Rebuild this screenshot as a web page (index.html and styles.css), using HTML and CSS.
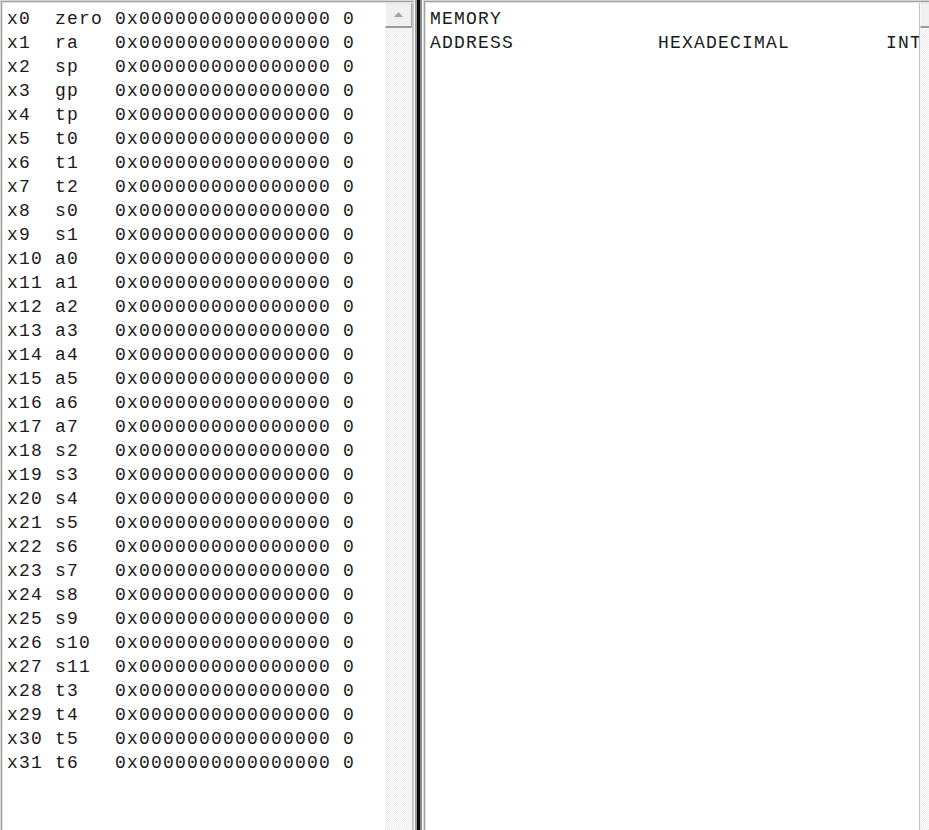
FILE: index.html
```html
<!DOCTYPE html>
<html>
<head>
<meta charset="utf-8">
<link rel="stylesheet" href="styles.css">
</head>
<body>
<div class="app">
  <div class="pane pane-left">
    <pre class="text">x0  zero 0x0000000000000000 0
x1  ra   0x0000000000000000 0
x2  sp   0x0000000000000000 0
x3  gp   0x0000000000000000 0
x4  tp   0x0000000000000000 0
x5  t0   0x0000000000000000 0
x6  t1   0x0000000000000000 0
x7  t2   0x0000000000000000 0
x8  s0   0x0000000000000000 0
x9  s1   0x0000000000000000 0
x10 a0   0x0000000000000000 0
x11 a1   0x0000000000000000 0
x12 a2   0x0000000000000000 0
x13 a3   0x0000000000000000 0
x14 a4   0x0000000000000000 0
x15 a5   0x0000000000000000 0
x16 a6   0x0000000000000000 0
x17 a7   0x0000000000000000 0
x18 s2   0x0000000000000000 0
x19 s3   0x0000000000000000 0
x20 s4   0x0000000000000000 0
x21 s5   0x0000000000000000 0
x22 s6   0x0000000000000000 0
x23 s7   0x0000000000000000 0
x24 s8   0x0000000000000000 0
x25 s9   0x0000000000000000 0
x26 s10  0x0000000000000000 0
x27 s11  0x0000000000000000 0
x28 t3   0x0000000000000000 0
x29 t4   0x0000000000000000 0
x30 t5   0x0000000000000000 0
x31 t6   0x0000000000000000 0</pre>
    <div class="vscroll">
      <div class="btn-up"><svg width="9" height="5" viewBox="0 0 9 5"><path d="M4.5 0 L9 5 L0 5 Z" fill="#a3a3a3"/></svg></div>
      <div class="track"></div>
    </div>
  </div>
  <div class="divider"></div>
  <div class="pane pane-right">
    <pre class="text">MEMORY
ADDRESS            HEXADECIMAL        INTEGER</pre>
    <div class="vscroll">
      <div class="btn-up"><svg width="9" height="5" viewBox="0 0 9 5"><path d="M4.5 0 L9 5 L0 5 Z" fill="#a3a3a3"/></svg></div>
      <div class="track"></div>
    </div>
  </div>
</div>
</body>
</html>
```
FILE: styles.css
```css
html, body {
  margin: 0;
  padding: 0;
  background: #ffffff;
  overflow: hidden;
}
.app {
  display: flex;
  width: 960px;
  height: 870px;
}
.pane {
  display: flex;
  box-sizing: border-box;
  height: 100%;
  border-top: 1px solid #d4d4d4;
  border-left: 1px solid #d8d8d8;
  box-shadow: inset 1px 1px 0 #a0a0a0, inset 2px 2px 0 #e3e3e3;
  padding: 2px 0 0 2px;
}
.pane-left {
  width: 414px;
  flex: none;
}
.pane-right {
  width: 526px;
  flex: none;
}
.text {
  flex: 1;
  min-width: 0;
  margin: 0;
  padding: 4px 0 0 4px;
  font-family: "Liberation Mono", "Courier New", monospace;
  font-size: 18px;
  letter-spacing: 1.2px;
  line-height: 24px;
  color: #1a1a1a;
  overflow: hidden;
  white-space: pre;
  background: #fff;
}
.vscroll {
  width: 27px;
  flex: none;
  display: flex;
  flex-direction: column;
  border-right: 2px solid #c8c8c8;
}
.pane-right .vscroll {
  border-left: 1px solid #c0c0c0;
}
.btn-up {
  height: 25px;
  box-sizing: border-box;
  background: #f0f0f0;
  border-top: 1px solid #e8e8e8;
  border-left: 1px solid #fafafa;
  border-right: 1px solid #a0a0a0;
  border-bottom: 2px solid #9a9a9a;
  display: flex;
  align-items: center;
  justify-content: center;
  padding-bottom: 2px;
}
.track {
  flex: 1;
  background-color: #f6f6f6;
  background-image: repeating-conic-gradient(#ededed 0 25%, #fbfbfb 0 50%);
  background-size: 2px 2px;
}
.divider {
  width: 9px;
  flex: none;
  height: 100%;
  background: linear-gradient(to right,
    #ffffff 0 1px,
    #9a9a9a 1px 3px,
    #0a0a0a 3px 6px,
    #8a8a8a 6px 8px,
    #ffffff 8px 9px);
}
```
